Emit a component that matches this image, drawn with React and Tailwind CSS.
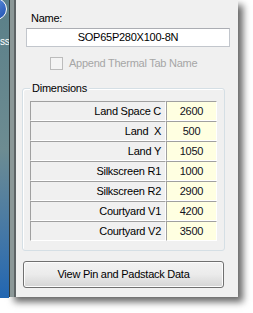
import React from "react";

const rows = [
  { label: "Land Space C", value: "2600" },
  { label: "Land  X", value: "500" },
  { label: "Land Y", value: "1050" },
  { label: "Silkscreen R1", value: "1000" },
  { label: "Silkscreen R2", value: "2900" },
  { label: "Courtyard V1", value: "4200" },
  { label: "Courtyard V2", value: "3500" },
];

function App() {
  return (
    <div
      className="w-[253px] h-[313px] bg-white overflow-hidden flex items-start text-[11px] tracking-[-0.25px] text-black"
      style={{ fontFamily: '"Liberation Sans", Arial, sans-serif' }}
    >
      {/* desktop strip */}
      <div className="relative w-[9px] h-[298px] overflow-hidden bg-gradient-to-b from-[#5a7f88] via-[#6d8c92] to-[#2166b2]">
        <div className="absolute -left-[15px] -top-[2px] w-[22px] h-[22px] rounded-full border border-white bg-gradient-to-br from-[#6fa0e8] to-[#1e4fb0]" />
        <span className="absolute left-0 top-[37px] text-[10px] leading-none text-white">ss</span>
      </div>

      {/* window */}
      <div className="flex h-[297px] shadow-[5px_5px_7px_rgba(0,0,0,0.6)]">
        <div className="w-[7px] h-full bg-[#8c9898] border-l-[1px] border-l-[#2f3a3c] border-r-[2px] border-r-[#5e6466]" />

        <div className="w-[222px] h-full bg-[#f0f0f0] flex flex-col">
          <div className="pl-[15px] pt-[12px] leading-[13px]">Name:</div>

          <div className="ml-[10px] mt-[3px] w-[204px] h-[19px] bg-white border border-[#c2c6cc] border-t-[#abadb3] flex items-center justify-center">
            SOP65P280X100-8N
          </div>

          <div className="flex items-center ml-[34px] mt-[10px] h-[13px]">
            <div className="w-[13px] h-[13px] border border-[#bcbcbc] bg-[#f4f4f4]" />
            <span className="ml-[6px] text-[#a6a6a6] leading-[13px]">Append Thermal Tab Name</span>
          </div>

          {/* Dimensions group */}
          <div className="relative ml-[6px] mt-[18px] w-[203px] h-[163px] border border-[#d5dfe5] rounded-[3px] shadow-[inset_1px_1px_0_#ffffff] pt-[12px] pl-[7px]">
            <span className="absolute left-[7px] -top-[7px] px-[2px] bg-[#f0f0f0] leading-[13px]">Dimensions</span>

            <div className="w-[187px] flex flex-col">
              {rows.map((r) => (
                <div key={r.label} className="flex h-[20px]">
                  <div className="w-[136px] h-full border-t border-l border-t-[#a0a0a0] border-l-[#a0a0a0] border-b border-r border-b-white border-r-white flex items-center justify-end pr-[4px] whitespace-pre">
                    {r.label}
                  </div>
                  <div className="w-[51px] h-full bg-[#ffffe1] border-t border-l border-t-[#a0a0a0] border-l-[#a0a0a0] border-b border-r border-b-white border-r-white flex items-center justify-center text-[#101020]">
                    {r.value}
                  </div>
                </div>
              ))}
            </div>
          </div>

          <button className="ml-[7px] mt-[10px] w-[201px] h-[27px] rounded-[3px] border border-[#707070] bg-gradient-to-b from-[#f2f2f2] via-[#ebebeb] to-[#d4d4d4] shadow-[inset_0_0_0_1px_#fcfcfc] flex items-center justify-center">
            View Pin and Padstack Data
          </button>
        </div>
      </div>
    </div>
  );
}

export default App;
